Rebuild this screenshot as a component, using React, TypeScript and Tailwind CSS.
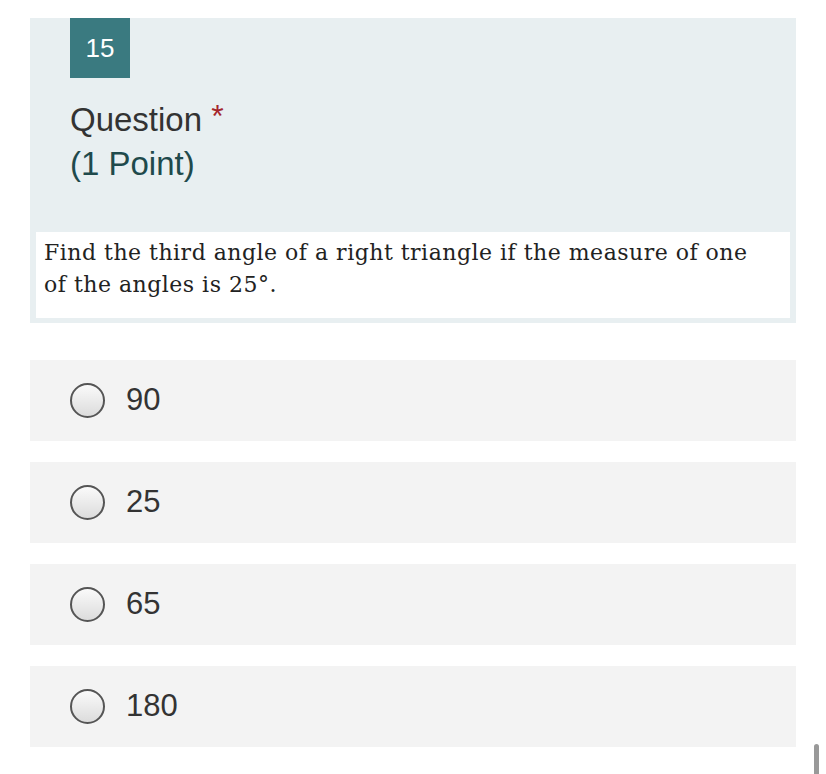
import React from "react";

const options = ["90", "25", "65", "180"];

export default function App() {
  return (
    <div className="relative w-[826px] h-[774px] bg-white overflow-hidden" style={{ fontFamily: '"Liberation Sans", Arial, sans-serif' }}>
      <div className="ml-[30px] mt-[18px] w-[766px] bg-[#e8eff1] pb-[5px]">
        <div className="ml-[40px] w-[60px] h-[60px] bg-[#3a7a80] text-white text-[26px] flex items-center justify-center">15</div>
        <div className="ml-[40px] mt-[20px] text-[33px] leading-[44px]">
          <div className="text-[#333333]">
            Question <span className="text-[#a4262c] text-[32px] align-top leading-[36px]">*</span>
          </div>
          <div className="text-[#1f4a4c]">(1 Point)</div>
        </div>
        <div className="mt-[46px] mx-[6px] bg-white pl-[8px] pr-[34px] pt-[5px] pb-[17px] text-[22px] tracking-[0.5px] leading-[32px] text-[#222]" style={{ fontFamily: '"DejaVu Serif", "Liberation Serif", serif' }}>
          Find the third angle of a right triangle if the measure of one of the angles is 25°.
        </div>
      </div>
      <div className="ml-[30px] mt-[37px] w-[766px] flex flex-col gap-[21px]">
        {options.map((o) => (
          <div key={o} className="h-[81px] bg-[#f3f3f3] flex items-center pl-[40px]">
            <div className="w-[35px] h-[35px] rounded-full border-2 border-[#555] bg-gradient-to-b from-[#fafafa] to-[#dcdcdc]" />
            <span className="ml-[21px] text-[31px] text-[#333]">{o}</span>
          </div>
        ))}
      </div>
      <div className="absolute left-[814px] top-[744px] w-[5px] h-[40px] rounded-full bg-[#999]" />
    </div>
  );
}
